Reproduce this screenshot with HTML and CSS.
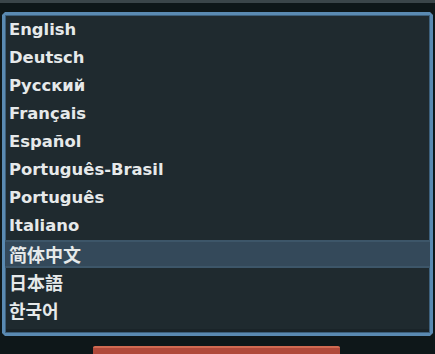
FILE: index.html
```html
<!DOCTYPE html>
<html>
<head>
<meta charset="utf-8">
<link rel="stylesheet" href="styles.css">
</head>
<body>
<div class="topstrip"></div>
<div class="panel">
  <ul class="langs">
    <li class="lang">English</li>
    <li class="lang">Deutsch</li>
    <li class="lang">Русский</li>
    <li class="lang">Français</li>
    <li class="lang">Español</li>
    <li class="lang">Português-Brasil</li>
    <li class="lang">Português</li>
    <li class="lang">Italiano</li>
    <li class="lang cjk selected">简体中文</li>
    <li class="lang cjk">日本語</li>
    <li class="lang cjk">한국어</li>
  </ul>
</div>
<div class="footer">
  <div class="button"></div>
</div>
</body>
</html>
```
FILE: styles.css
```css
html, body {
  margin: 0;
  padding: 0;
  width: 435px;
  height: 354px;
  overflow: hidden;
  background: #0e1719;
  font-family: "DejaVu Sans", "Noto Sans CJK SC", "Noto Sans CJK JP", "Noto Sans CJK KR", sans-serif;
}

.topstrip {
  height: 3px;
  background: #3a4549;
}

.panel {
  margin: 9px 0 0 2px;
  width: 431px;
  height: 324px;
  box-sizing: border-box;
  background: #1f2a2f;
  border: 3px solid #5a8ab2;
  box-shadow: inset 0 0 0 1px #3d607c, inset 0 -4px 0 #1a2429;
  clip-path: polygon(3px 0, calc(100% - 3px) 0, 100% 3px, 100% calc(100% - 3px), calc(100% - 3px) 100%, 3px 100%, 0 calc(100% - 3px), 0 3px);
  padding-top: 1px;
}

.langs {
  list-style: none;
  margin: 0;
  padding: 0;
}

.lang {
  height: 28px;
  line-height: 28px;
  padding-left: 4px;
  color: #e6e9ea;
  font-size: 16.4px;
  font-weight: 700;
  box-sizing: border-box;
}

.lang.cjk {
  font-family: "Noto Sans CJK SC", "Noto Sans CJK JP", "Noto Sans CJK KR", sans-serif;
  font-size: 18px;
  font-weight: 600;
}

.lang.selected {
  background: #34495a;
  border-top: 2px solid #3d5669;
  border-bottom: 2px solid #3d5669;
  line-height: 24px;
}

.footer {
  display: flex;
  padding: 10px 0 0 93px;
}

.button {
  width: 247px;
  height: 12px;
  background: #b0493a;
  border-top: 2px solid #cf6a52;
  border-radius: 2px 2px 0 0;
}
```
